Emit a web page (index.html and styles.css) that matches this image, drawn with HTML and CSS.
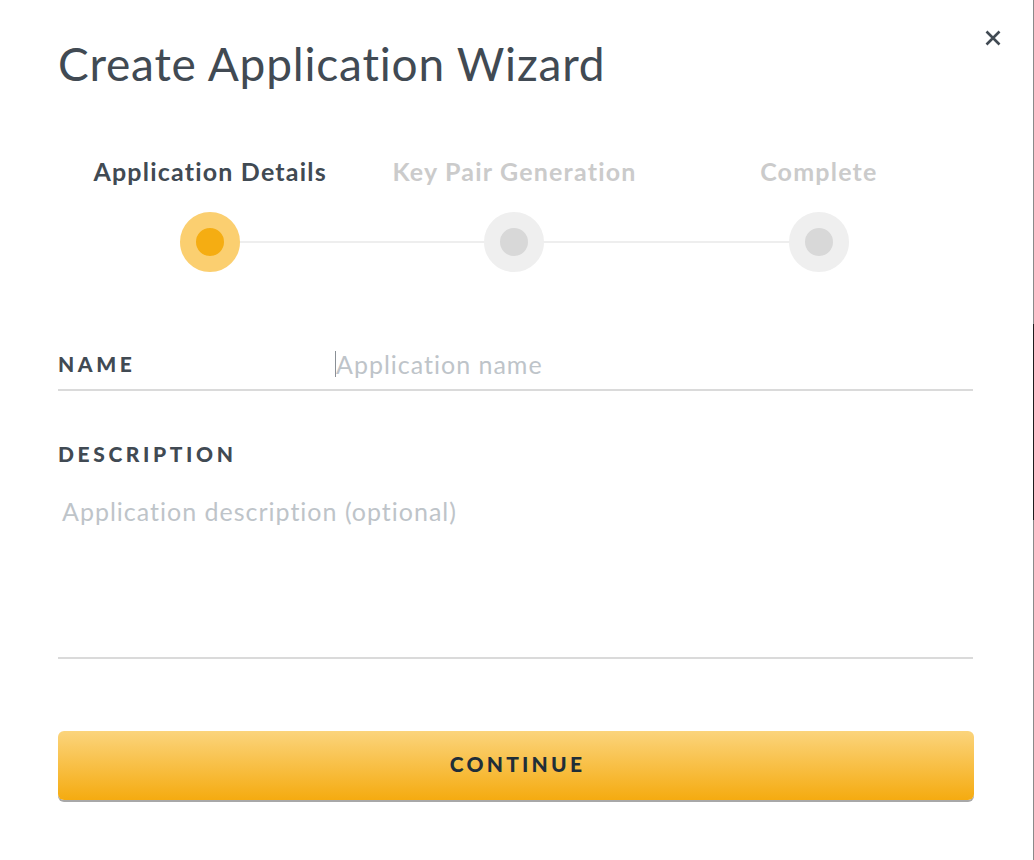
FILE: index.html
```html
<!DOCTYPE html>
<html lang="en">
<head>
<meta charset="utf-8">
<title>Create Application Wizard</title>
<link rel="stylesheet" href="styles.css">
</head>
<body>
<div class="modal">
  <button class="close" aria-label="Close">
    <svg width="18" height="18" viewBox="0 0 18 18"><path d="M2.5 2.5 L15.5 15.5 M15.5 2.5 L2.5 15.5" stroke="#414a53" stroke-width="2.6" stroke-linecap="butt"/></svg>
  </button>
  <h1 class="title">Create Application Wizard</h1>

  <div class="steps">
    <div class="step active">
      <div class="step-label">Application Details</div>
      <div class="step-track"><span class="dot"></span></div>
    </div>
    <div class="step">
      <div class="step-label">Key Pair Generation</div>
      <div class="step-track"><span class="dot"></span></div>
    </div>
    <div class="step last">
      <div class="step-label">Complete</div>
      <div class="step-track"><span class="dot"></span></div>
    </div>
  </div>

  <div class="field name-field">
    <label class="label">NAME</label>
    <div class="input"><span class="caret"></span><span class="placeholder">Application name</span></div>
  </div>

  <div class="field desc-field">
    <label class="label">DESCRIPTION</label>
    <div class="textarea"><span class="placeholder">Application description (optional)</span></div>
  </div>

  <button class="continue">CONTINUE</button>
  <div class="scrollbar"><span class="thumb"></span></div>
</div>
</body>
</html>
```
FILE: styles.css
```css
html, body {
  margin: 0;
  padding: 0;
  background: #ffffff;
}
body {
  font-family: "Lato", "Open Sans", sans-serif;
  color: #414a53;
}
.modal {
  position: relative;
  width: 1034px;
  height: 860px;
  box-sizing: border-box;
  padding: 34px 60px 0 58px;
  border-right: 1px solid #8a8a8a;
  background: #fff;
}
.scrollbar {
  position: absolute;
  right: -1px;
  top: 0;
  width: 1px;
  height: 860px;
}
.thumb {
  position: absolute;
  left: 0;
  top: 324px;
  width: 1px;
  height: 196px;
  background: #1e1e1e;
}
.close {
  position: absolute;
  top: 29px;
  right: 31px;
  width: 18px;
  height: 18px;
  padding: 0;
  border: 0;
  background: none;
  display: flex;
}
.title {
  margin: 0;
  font-size: 46px;
  font-weight: 400;
  line-height: 60px;
  color: #414a53;
  letter-spacing: 0.8px;
}
.steps {
  margin-top: 60px;
  margin-right: 2px;
  display: grid;
  grid-template-columns: repeat(3, 1fr);
}
.step {
  display: flex;
  flex-direction: column;
  align-items: center;
}
.step-label {
  font-size: 25px;
  font-weight: 700;
  line-height: 34px;
  letter-spacing: 1.2px;
  color: #cbcbcb;
}
.step.active .step-label {
  color: #414a53;
}
.step-track {
  position: relative;
  width: 100%;
  height: 60px;
  margin-top: 24px;
  display: flex;
  justify-content: center;
  align-items: center;
}
.step-track::after {
  content: "";
  position: absolute;
  left: 50%;
  width: 100%;
  top: 29px;
  height: 2px;
  background: #eeeeee;
  z-index: 0;
}
.step.last .step-track::after {
  display: none;
}
.dot {
  position: relative;
  z-index: 1;
  width: 28px;
  height: 28px;
  border-radius: 50%;
  background: #d8d8d8;
  border: 16px solid #efefef;
}
.step.active .dot {
  background: #f5ad12;
  border-color: #fbcf70;
}
.field {
  border-bottom: 2px solid #dadada;
}
.name-field {
  margin-top: 70px;
  display: flex;
  align-items: center;
  height: 43px;
  padding-bottom: 4px;
}
.label {
  font-size: 21px;
  font-weight: 900;
  letter-spacing: 3.6px;
  color: #414a53;
  line-height: 24px;
}
.name-field .label {
  width: 277px;
}
.input {
  display: flex;
  align-items: center;
}
.caret {
  width: 1px;
  height: 26px;
  background: #8a9096;
}
.placeholder {
  font-size: 25px;
  letter-spacing: 1px;
  color: #bec4c9;
  font-weight: 400;
}
.desc-field {
  margin-top: 51px;
  height: 215px;
  display: flex;
  flex-direction: column;
}
.textarea {
  margin-top: 29px;
  padding-left: 4px;
  line-height: 32px;
}
.continue {
  margin-top: 72px;
  width: 916px;
  height: 69px;
  border: 0;
  border-radius: 6px;
  background: linear-gradient(#fbd47c, #f5ab10);
  box-shadow: 0 2px 0 #a8a8a8;
  font-family: "Lato", sans-serif;
  font-size: 21px;
  font-weight: 900;
  letter-spacing: 3.2px;
  color: #1f2e38;
  display: block;
  padding: 0 0 4px 3px;
}
```
